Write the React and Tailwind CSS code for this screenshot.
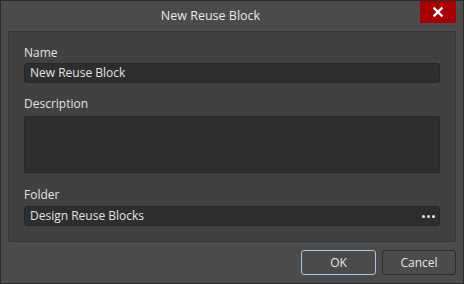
export default function App() {
  return (
    <div
      className="w-[464px] h-[284px] bg-[#4b4b4b] border border-[#2b2b2b] flex flex-col text-[12px] text-[#e2e2e2]"
      style={{ fontFamily: '"Open Sans", "Noto Sans", sans-serif' }}
    >
      {/* Title bar */}
      <div className="h-[30px] flex items-start shrink-0">
        <div className="flex-1 h-[30px] flex items-center justify-center text-[12.5px] text-[#e8e8e8]">
          New Reuse Block
        </div>
        <button className="w-[36px] h-[22px] mr-[7px] bg-[#a80000] flex items-center justify-center">
          <svg width="10" height="10" viewBox="0 0 10 10">
            <path d="M1.5 1.5 L8.5 8.5 M8.5 1.5 L1.5 8.5" stroke="#fff" strokeWidth="2.4" strokeLinecap="square" />
          </svg>
        </button>
      </div>

      {/* Panel */}
      <div className="mx-[7px] bg-[#414141] border border-[#383838] pt-[13px] pb-[15px] pl-[15px] pr-[15px] flex flex-col">
        <div className="leading-[16px] mb-[2px]">Name</div>
        <div className="h-[20px] bg-[#2e2e2e] border border-[#272727] rounded-[3px] flex items-center pl-[5px] leading-none">
          New Reuse Block
        </div>

        <div className="leading-[16px] mt-[13px] mb-[4px]">Description</div>
        <div className="h-[57px] bg-[#2e2e2e] border border-[#282828]"></div>

        <div className="leading-[16px] mt-[14px] mb-[3px]">Folder</div>
        <div className="h-[20px] bg-[#2e2e2e] border border-[#272727] rounded-[3px] flex items-center justify-between pl-[5px] pr-[4px] leading-none">
          <span>Design Reuse Blocks</span>
          <span className="flex gap-[2px] items-center">
            <span className="w-[3px] h-[3px] rounded-full bg-[#f0f0f0]"></span>
            <span className="w-[3px] h-[3px] rounded-full bg-[#f0f0f0]"></span>
            <span className="w-[3px] h-[3px] rounded-full bg-[#f0f0f0]"></span>
          </span>
        </div>
      </div>

      {/* Buttons */}
      <div className="flex justify-end gap-[6px] mt-[8px] mr-[7px]">
        <button className="w-[75px] h-[25px] rounded-[3px] border border-[#a9c6e2] bg-[#4b4b4b] text-[#e6e6e6] flex items-center justify-center">
          OK
        </button>
        <button className="w-[74px] h-[25px] rounded-[3px] border border-[#2c2c2c] bg-[#4b4b4b] text-[#e6e6e6] flex items-center justify-center">
          Cancel
        </button>
      </div>
    </div>
  );
}
